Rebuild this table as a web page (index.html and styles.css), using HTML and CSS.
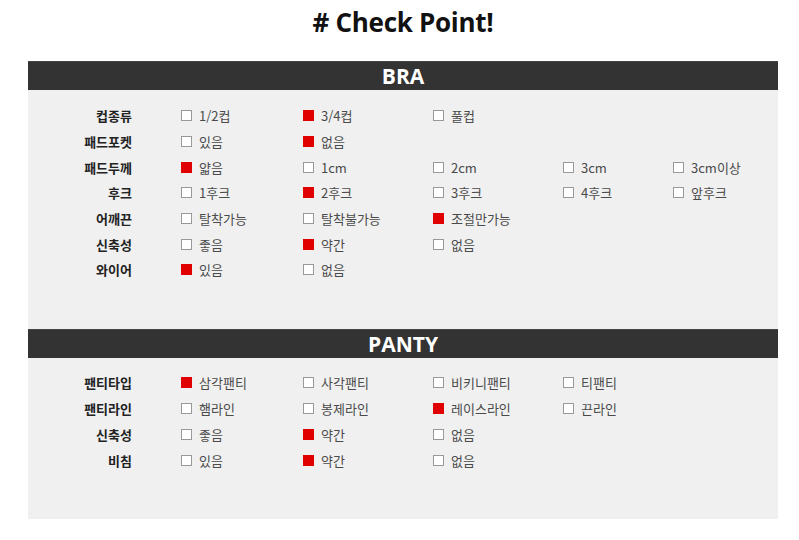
FILE: index.html
```html
<!DOCTYPE html>
<html lang="ko">
<head>
<meta charset="utf-8">
<link rel="stylesheet" href="styles.css">
</head>
<body>
<div class="page">
  <h1 class="title"># Check Point!</h1>
  <div class="sheet">
    <div class="bar">BRA</div>
    <div class="body bra">
      <div class="row"><div class="label">컵종류</div><div class="opt"><i class="box"></i>1/2컵</div><div class="opt"><i class="box on"></i>3/4컵</div><div class="opt"><i class="box"></i>풀컵</div></div>
      <div class="row"><div class="label">패드포켓</div><div class="opt"><i class="box"></i>있음</div><div class="opt"><i class="box on"></i>없음</div></div>
      <div class="row"><div class="label">패드두께</div><div class="opt"><i class="box on"></i>얇음</div><div class="opt"><i class="box"></i>1cm</div><div class="opt"><i class="box"></i>2cm</div><div class="opt"><i class="box"></i>3cm</div><div class="opt"><i class="box"></i>3cm이상</div></div>
      <div class="row"><div class="label">후크</div><div class="opt"><i class="box"></i>1후크</div><div class="opt"><i class="box on"></i>2후크</div><div class="opt"><i class="box"></i>3후크</div><div class="opt"><i class="box"></i>4후크</div><div class="opt"><i class="box"></i>앞후크</div></div>
      <div class="row"><div class="label">어깨끈</div><div class="opt"><i class="box"></i>탈착가능</div><div class="opt"><i class="box"></i>탈착불가능</div><div class="opt"><i class="box on"></i>조절만가능</div></div>
      <div class="row"><div class="label">신축성</div><div class="opt"><i class="box"></i>좋음</div><div class="opt"><i class="box on"></i>약간</div><div class="opt"><i class="box"></i>없음</div></div>
      <div class="row"><div class="label">와이어</div><div class="opt"><i class="box on"></i>있음</div><div class="opt"><i class="box"></i>없음</div></div>
    </div>
    <div class="bar">PANTY</div>
    <div class="body panty">
      <div class="row"><div class="label">팬티타입</div><div class="opt"><i class="box on"></i>삼각팬티</div><div class="opt"><i class="box"></i>사각팬티</div><div class="opt"><i class="box"></i>비키니팬티</div><div class="opt"><i class="box"></i>티팬티</div></div>
      <div class="row"><div class="label">팬티라인</div><div class="opt"><i class="box"></i>햄라인</div><div class="opt"><i class="box"></i>봉제라인</div><div class="opt"><i class="box on"></i>레이스라인</div><div class="opt"><i class="box"></i>끈라인</div></div>
      <div class="row"><div class="label">신축성</div><div class="opt"><i class="box"></i>좋음</div><div class="opt"><i class="box on"></i>약간</div><div class="opt"><i class="box"></i>없음</div></div>
      <div class="row"><div class="label">비침</div><div class="opt"><i class="box"></i>있음</div><div class="opt"><i class="box on"></i>약간</div><div class="opt"><i class="box"></i>없음</div></div>
    </div>
  </div>
</div>
</body>
</html>
```

FILE: styles.css
```css
* { box-sizing: border-box; }
html, body { margin: 0; padding: 0; background: #fff; }
body {
  font-family: "Noto Sans CJK KR", "Noto Sans", sans-serif;
  color: #222;
}
.page { width: 799px; padding: 0 21px 0 28px; }
.title {
  margin: 0;
  height: 61px;
  padding-top: 5px;
  text-align: center;
  font-family: "Open Sans", "Noto Sans CJK KR", sans-serif;
  font-weight: 700;
  font-size: 26px;
  line-height: 34px;
  letter-spacing: -0.3px;
  color: #111;
}
.sheet { width: 750px; background: #f0f0f0; }
.bar {
  height: 29px;
  background: #333;
  border-top: 1px solid #444;
  color: #fff;
  text-align: center;
  font-family: "Open Sans", "Noto Sans CJK KR", sans-serif;
  font-weight: 700;
  font-size: 21px;
  line-height: 29px;
}
.body.bra { padding: 13px 0 46px; }
.body.panty { padding: 12px 0 45px; }
.row {
  display: flex;
  align-items: center;
  height: 25.7px;
  font-size: 13px;
}
.panty .row { height: 26px; }
.label {
  flex: none;
  width: 104px;
  text-align: right;
  font-weight: 700;
  color: #222;
  margin-right: 49px;
}
.opt {
  flex: none;
  display: flex;
  align-items: center;
  color: #4a4a4a;
  width: 130px;
}
.opt:nth-child(2) { width: 122px; }
.opt:nth-child(5) { width: 110px; }
.opt:nth-child(6) { width: auto; }
.box {
  display: block;
  width: 11px;
  height: 11px;
  border: 1px solid #999;
  background: #fff;
  margin-right: 7px;
  flex: none;
}
.box.on { background: #e00000; border-color: #e00000; }
```
